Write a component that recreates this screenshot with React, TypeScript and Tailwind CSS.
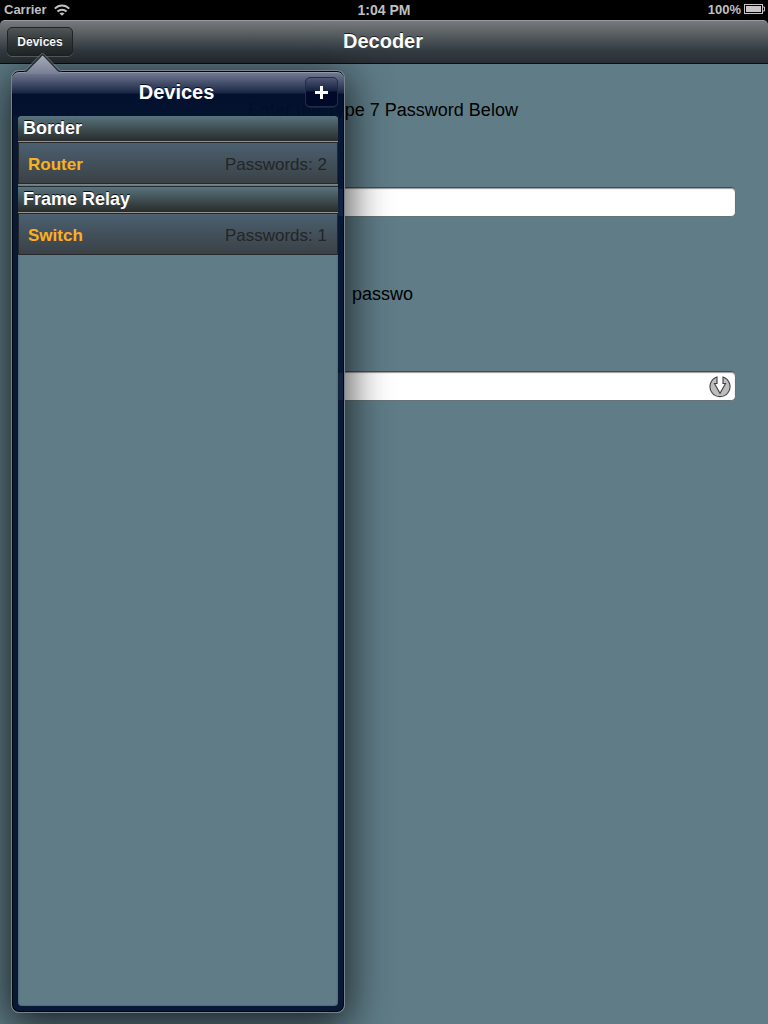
import React from "react";

type Device = { name: string; passwords: number };
type Section = { title: string; devices: Device[] };

const sections: Section[] = [
  { title: "Border", devices: [{ name: "Router", passwords: 2 }] },
  { title: "Frame Relay", devices: [{ name: "Switch", passwords: 1 }] },
];

function StatusBar() {
  return (
    <div className="grid h-5 shrink-0 grid-cols-3 items-center bg-black text-[13px] leading-5 font-bold text-[#bfbfbf]">
      <div className="flex items-center gap-[7px] pl-1">
        <span>Carrier</span>
        <svg width="16" height="12" viewBox="0 0 16 12" fill="none" stroke="#bfbfbf" strokeWidth="2">
          <path d="M.8 4.6C4.9.5 11.1.5 15.2 4.6" />
          <path d="M3.4 7.5C6 5 10 5 12.6 7.5" />
          <path d="M8 11.8 5.5 9.4Q8 7.6 10.5 9.4Z" fill="#bfbfbf" stroke="none" />
        </svg>
      </div>
      <div className="text-center text-[14px] leading-[18px]">1:04 PM</div>
      <div className="flex items-center justify-end gap-[3px] pr-[3px]">
        <span>100%</span>
        <svg className="-translate-y-px" width="21" height="10" viewBox="0 0 21 10">
          <rect x=".5" y=".5" width="18" height="9" fill="none" stroke="#c8c4c8" />
          <rect x="2" y="2" width="15" height="6" fill="#c8c4c8" />
          <path d="M19 3h1.5v4H19" fill="none" stroke="#c8c4c8" />
        </svg>
      </div>
    </div>
  );
}

function Toolbar() {
  return (
    <div className="shrink-0 bg-black">
      <header className="grid h-11 grid-cols-[1fr_auto_1fr] items-center rounded-t-[5px] border-t border-b border-t-[#989b9d] border-b-[#0b0d0f] bg-[linear-gradient(to_bottom,#777a7d_0%,#555b5f_35%,#343c43_70%,#292f33_100%)] px-[7px] pb-px">
        <button className="h-[29px] w-[66px] rounded-[5px] border border-[#202427] bg-linear-to-b from-[#515659] via-[#343a3c] to-[#222829] text-[12px] font-bold text-white shadow-[0_1px_0_#5b6267] text-shadow-[0_-1px_0_#111]">
          Devices
        </button>
        <h1 className="-translate-x-px -translate-y-px text-[20px] leading-6 font-bold text-white text-shadow-[0_-1px_0_#222]">Decoder</h1>
      </header>
    </div>
  );
}

function DownloadIcon() {
  return (
    <svg className="translate-y-px" width="22" height="22" viewBox="0 0 22 22">
      <path
        d="M8 1.1A10 10 0 1 0 14 1.1V7.5H16.5L11 17.3 5.5 7.5H8Z"
        fill="#bdbdbd"
        stroke="#414141"
        strokeWidth="1.1"
      />
    </svg>
  );
}

function Field({ children }: { children?: React.ReactNode }) {
  return (
    <div className="flex h-[30px] items-center justify-end rounded-[5px] border border-[#657379] border-t-[#424d52] bg-white pr-1 shadow-[inset_0_1px_1px_#999]">
      {children}
    </div>
  );
}

function DeviceRow({ name, passwords }: Device) {
  return (
    <div className="flex h-[42px] items-center justify-between border border-[#25282a] bg-linear-to-b from-[#4b6070] to-[#3a4146] px-[9px] pt-[3px] text-[17px]">
      <span className="font-bold text-[#fcb020]">{name}</span>
      <span className="pr-px text-[#242525]">Passwords: {passwords}</span>
    </div>
  );
}

function Popover() {
  return (
    <section className="absolute top-[70px] left-[11px] flex h-[943px] w-[334px] flex-col rounded-[8px] border border-[#77838a] bg-[#00102e]/92 bg-clip-padding px-[6px] pb-[6px] shadow-[inset_0_0_0_1px_#02050a,0_9px_42px_4px_rgba(0,0,0,0.72)]">
      <svg className="absolute -top-[19px] left-[12px]" width="38" height="22" viewBox="0 0 38 22">
        <defs>
          <linearGradient id="arrow" x1="0" y1="0" x2="0" y2="1">
            <stop stopColor="#a9adba" />
            <stop offset="1" stopColor="#777f94" />
          </linearGradient>
        </defs>
        <path d="M1 21 3 19 19 3 35 19 37 21V22H1Z" fill="url(#arrow)" />
        <path d="M0 18.5Q1 18.5 2 17.5L18.5 1 35 17.5Q36 18.5 38 18.5" fill="none" stroke="#77838a" strokeWidth="1" />
        <path d="M0 19.5Q2 19.5 3 18.5L18.5 2.3 34 18.5Q35 19.5 38 19.5" fill="none" stroke="#222b32" strokeWidth="1.2" />
      </svg>
      <div className="-mx-[6px] mt-px grid h-11 shrink-0 grid-cols-[1fr_auto_1fr] items-center rounded-t-[7px] border-t border-[#9298a7] bg-[linear-gradient(to_bottom,#707990_0px,#192544_20px,#020d2bb3_21px,#02102bb3_44px)] px-[6px] pb-[3px]">
        <span />
        <h2 className="-translate-x-[1.5px] -translate-y-px text-[20px] leading-6 font-bold text-white text-shadow-[0_-1px_0_#071020]">Devices</h2>
        <button aria-label="Add" className="flex h-[30px] w-[33px] -translate-y-px items-center justify-center justify-self-end rounded-[5px] border border-[#242c45] bg-[linear-gradient(to_bottom,#4f5873_0px,#14203f_13px,#000a28_14px,#000a28_28px)] shadow-[0_1px_0_#19243c]">
          <svg width="13" height="13" viewBox="0 0 13 13" fill="white">
            <path d="M5 0h3v5h5v3H8v5H5V8H0V5h5Z" />
          </svg>
        </button>
      </div>
      <div className="flex-1 overflow-hidden rounded-[4px] bg-[#5f7c87] shadow-[inset_0_0_2px_#344e5a]">
        {sections.map((s, i) => (
          <div key={s.title} className={i === 0 ? "" : "border-t border-[#75858b]"}>
            <div className={`${i === 0 ? "h-[26px] leading-6" : "mt-px h-[27px] border-t border-t-[#252c2f] leading-[25px]"} border-b border-b-[#96938d] bg-linear-to-b from-[#58747e] to-[#292c2b] pl-[5px] text-[18px] font-bold text-white text-shadow-[0_-1px_0_#111]`}>
              {s.title}
            </div>
            {s.devices.map((d) => (
              <DeviceRow key={d.name} {...d} />
            ))}
          </div>
        ))}
        <div className="h-px bg-[#71777a]" />
      </div>
    </section>
  );
}

export default function App() {
  return (
    <div className="relative flex h-[1024px] w-[768px] flex-col overflow-hidden bg-[#5f7c87] font-['Liberation_Sans',Arial,sans-serif]">
      <StatusBar />
      <Toolbar />
      <main className="flex flex-1 flex-col px-8 text-[18px] leading-6 text-black">
        <p className="mt-[34px] -translate-x-px text-center">Enter the Type 7 Password Below</p>
        <div className="mt-[65px]"><Field /></div>
        <p className="mt-[65px] pl-[320px]">passwo</p>
        <div className="mt-[65px]"><Field><DownloadIcon /></Field></div>
      </main>
      <Popover />
    </div>
  );
}
